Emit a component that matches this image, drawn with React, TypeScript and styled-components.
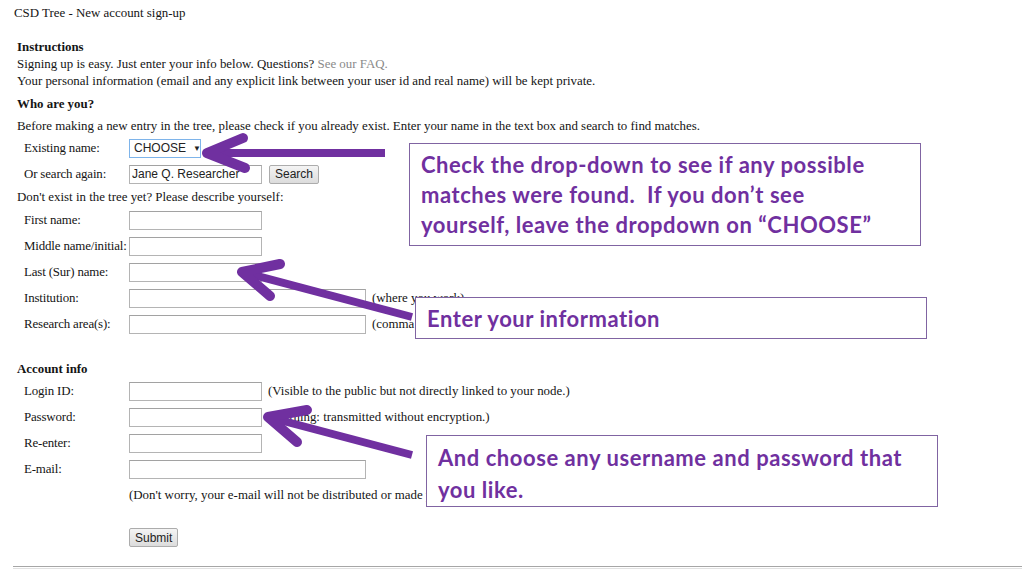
import React from "react";
import styled, { createGlobalStyle } from "styled-components";

const GlobalStyle = createGlobalStyle`
  html, body {
    margin: 0;
    padding: 0;
    background: #ffffff;
    overflow: hidden;
  }
`;

const Page = styled.div`
  position: relative;
  width: 1024px;
  height: 576px;
  box-sizing: border-box;
  padding: 5px 2px 0 14px;
  font-family: "Liberation Serif", "Times New Roman", serif;
  font-size: 12.9px;
  line-height: 17px;
  color: #151515;
  overflow: hidden;
`;

const Title = styled.div`
  line-height: 17px;
`;

const Section = styled.div`
  padding-left: 3px;
`;

const Heading = styled.div<{ $top: number }>`
  margin-top: ${(p) => p.$top}px;
  font-weight: bold;
  line-height: 17px;
`;

const Line = styled.div<{ $top?: number; $height?: number }>`
  margin-top: ${(p) => p.$top || 0}px;
  line-height: ${(p) => p.$height || 17}px;
`;

const Link = styled.span`
  color: #8a8a8a;
`;

const Row = styled.div`
  display: flex;
  align-items: center;
  height: 26px;
`;

const Label = styled.div`
  width: 105px;
  padding-left: 7px;
  flex-shrink: 0;
  white-space: nowrap;
  letter-spacing: -0.15px;
`;

const Note = styled.span`
  margin-left: 6px;
  white-space: nowrap;
`;

const TextBox = styled.input<{ $wide?: boolean }>`
  box-sizing: border-box;
  width: ${(p) => (p.$wide ? 237 : 133)}px;
  height: 19px;
  margin: 0;
  padding: 0 2px;
  border: 1px solid #b4b4b4;
  border-top-color: #a2a2a2;
  background: #ffffff;
  font-family: "Liberation Sans", Arial, sans-serif;
  font-size: 12px;
  color: #222;
  outline: none;
`;

const Select = styled.div`
  box-sizing: border-box;
  display: flex;
  align-items: center;
  width: 72px;
  height: 19px;
  padding: 0 4px;
  gap: 7px;
  border: 1px solid #7eb4ea;
  background: #ffffff;
  font-family: "Liberation Sans", Arial, sans-serif;
  font-size: 12px;
  color: #222;

  span:last-child {
    font-size: 8px;
  }
`;

const Button = styled.button<{ $gap?: number }>`
  box-sizing: border-box;
  height: 19px;
  margin: 0 0 0 ${(p) => p.$gap || 0}px;
  padding: 0 5px;
  border: 1px solid #acacac;
  border-radius: 2px;
  background: linear-gradient(#f4f4f4, #dcdcdc);
  font-family: "Liberation Sans", Arial, sans-serif;
  font-size: 12px;
  color: #222;
`;

const Indent = styled.div<{ $top?: number }>`
  margin-top: ${(p) => p.$top || 0}px;
  padding-left: 112px;
  display: flex;
  align-items: center;
`;

const Rule = styled.div`
  margin: 19px 0 0 -1px;
  height: 1px;
  border-top: 1px solid #a6a6a6;
  border-bottom: 1px solid #e2e2e2;
`;

const ArrowLayer = styled.svg`
  position: absolute;
  left: 0;
  top: 0;
  pointer-events: none;
`;

const Callout = styled.div<{ $left: number; $top: number; $height: number; $lh: number }>`
  position: absolute;
  left: ${(p) => p.$left}px;
  top: ${(p) => p.$top}px;
  width: 512px;
  height: ${(p) => p.$height}px;
  box-sizing: border-box;
  padding: 6px 6px 0 11px;
  border: 1.5px solid #8064a2;
  background: #ffffff;
  font-family: Lato, "Open Sans", sans-serif;
  font-weight: 700;
  font-size: 22px;
  letter-spacing: 0.55px;
  line-height: ${(p) => p.$lh}px;
  color: #70309f;
  white-space: nowrap;
`;

const arrows = [
  { tail: "385 153", tip: "210 153", head: "M243 138 L207 153 L245 168" },
  { tail: "412 317", tip: "246 273", head: "M280 264 L242 272 L270 296" },
  { tail: "412 455", tip: "272 418", head: "M307 410 L268 417 L297 442" },
];

function Field({ label, wide, note, value }: { label: string; wide?: boolean; note?: string; value?: string }) {
  return (
    <Row>
      <Label>{label}</Label>
      <TextBox $wide={wide} value={value || ""} readOnly />
      {note && <Note>{note}</Note>}
    </Row>
  );
}

export default function App() {
  return (
    <>
      <GlobalStyle />
      <Page>
        <Title>CSD Tree - New account sign-up</Title>
        <Section>
          <Heading $top={17}>Instructions</Heading>
          <Line>
            Signing up is easy. Just enter your info below. Questions? <Link>See our FAQ.</Link>
          </Line>
          <Line>
            Your personal information (email and any explicit link between your user id and real name) will be kept
            private.
          </Line>
          <Heading $top={6}>Who are you?</Heading>
          <Line $top={5}>
            Before making a new entry in the tree, please check if you already exist. Enter your name in the text box
            and search to find matches.
          </Line>
          <Row>
            <Label>Existing name:</Label>
            <Select>
              <span>CHOOSE</span>
              <span>▼</span>
            </Select>
          </Row>
          <Row>
            <Label>Or search again:</Label>
            <TextBox value="Jane Q. Researcher" readOnly />
            <Button $gap={7}>Search</Button>
          </Row>
          <Line $height={20}>Don't exist in the tree yet? Please describe yourself:</Line>
          <Field label="First name:" />
          <Field label="Middle name/initial:" />
          <Field label="Last (Sur) name:" />
          <Field label="Institution:" wide note="(where you work)" />
          <Field label="Research area(s):" wide note="(comma separated list)" />

          <Heading $top={24}>Account info</Heading>
          <Field label="Login ID:" note="(Visible to the public but not directly linked to your node.)" />
          <Field label="Password:" note="(Warning: transmitted without encryption.)" />
          <Field label="Re-enter:" />
          <Field label="E-mail:" wide />
          <Indent>
            <Line $height={26}>(Don't worry, your e-mail will not be distributed or made public.)</Line>
          </Indent>
          <Indent $top={20}>
            <Button>Submit</Button>
          </Indent>
        </Section>
        <Rule />

        <ArrowLayer width={1024} height={576} viewBox="0 0 1024 576">
          {arrows.map((a, i) => (
            <g key={i} fill="none" stroke="#7030a0">
              <path d={`M${a.tail} L${a.tip}`} strokeWidth={8} />
              <path d={a.head} strokeWidth={10} strokeLinecap="round" strokeLinejoin="round" />
            </g>
          ))}
        </ArrowLayer>

        <Callout $left={409} $top={143} $height={103} $lh={30}>
          Check the drop-down to see if any possible
          <br />
          matches were found.&nbsp; If you don’t see
          <br />
          yourself, leave the dropdown on “CHOOSE”
        </Callout>
        <Callout $left={415} $top={297} $height={42} $lh={30}>
          Enter your information
        </Callout>
        <Callout $left={426} $top={435} $height={72} $lh={32}>
          And choose any username and password that
          <br />
          you like.
        </Callout>
      </Page>
    </>
  );
}
